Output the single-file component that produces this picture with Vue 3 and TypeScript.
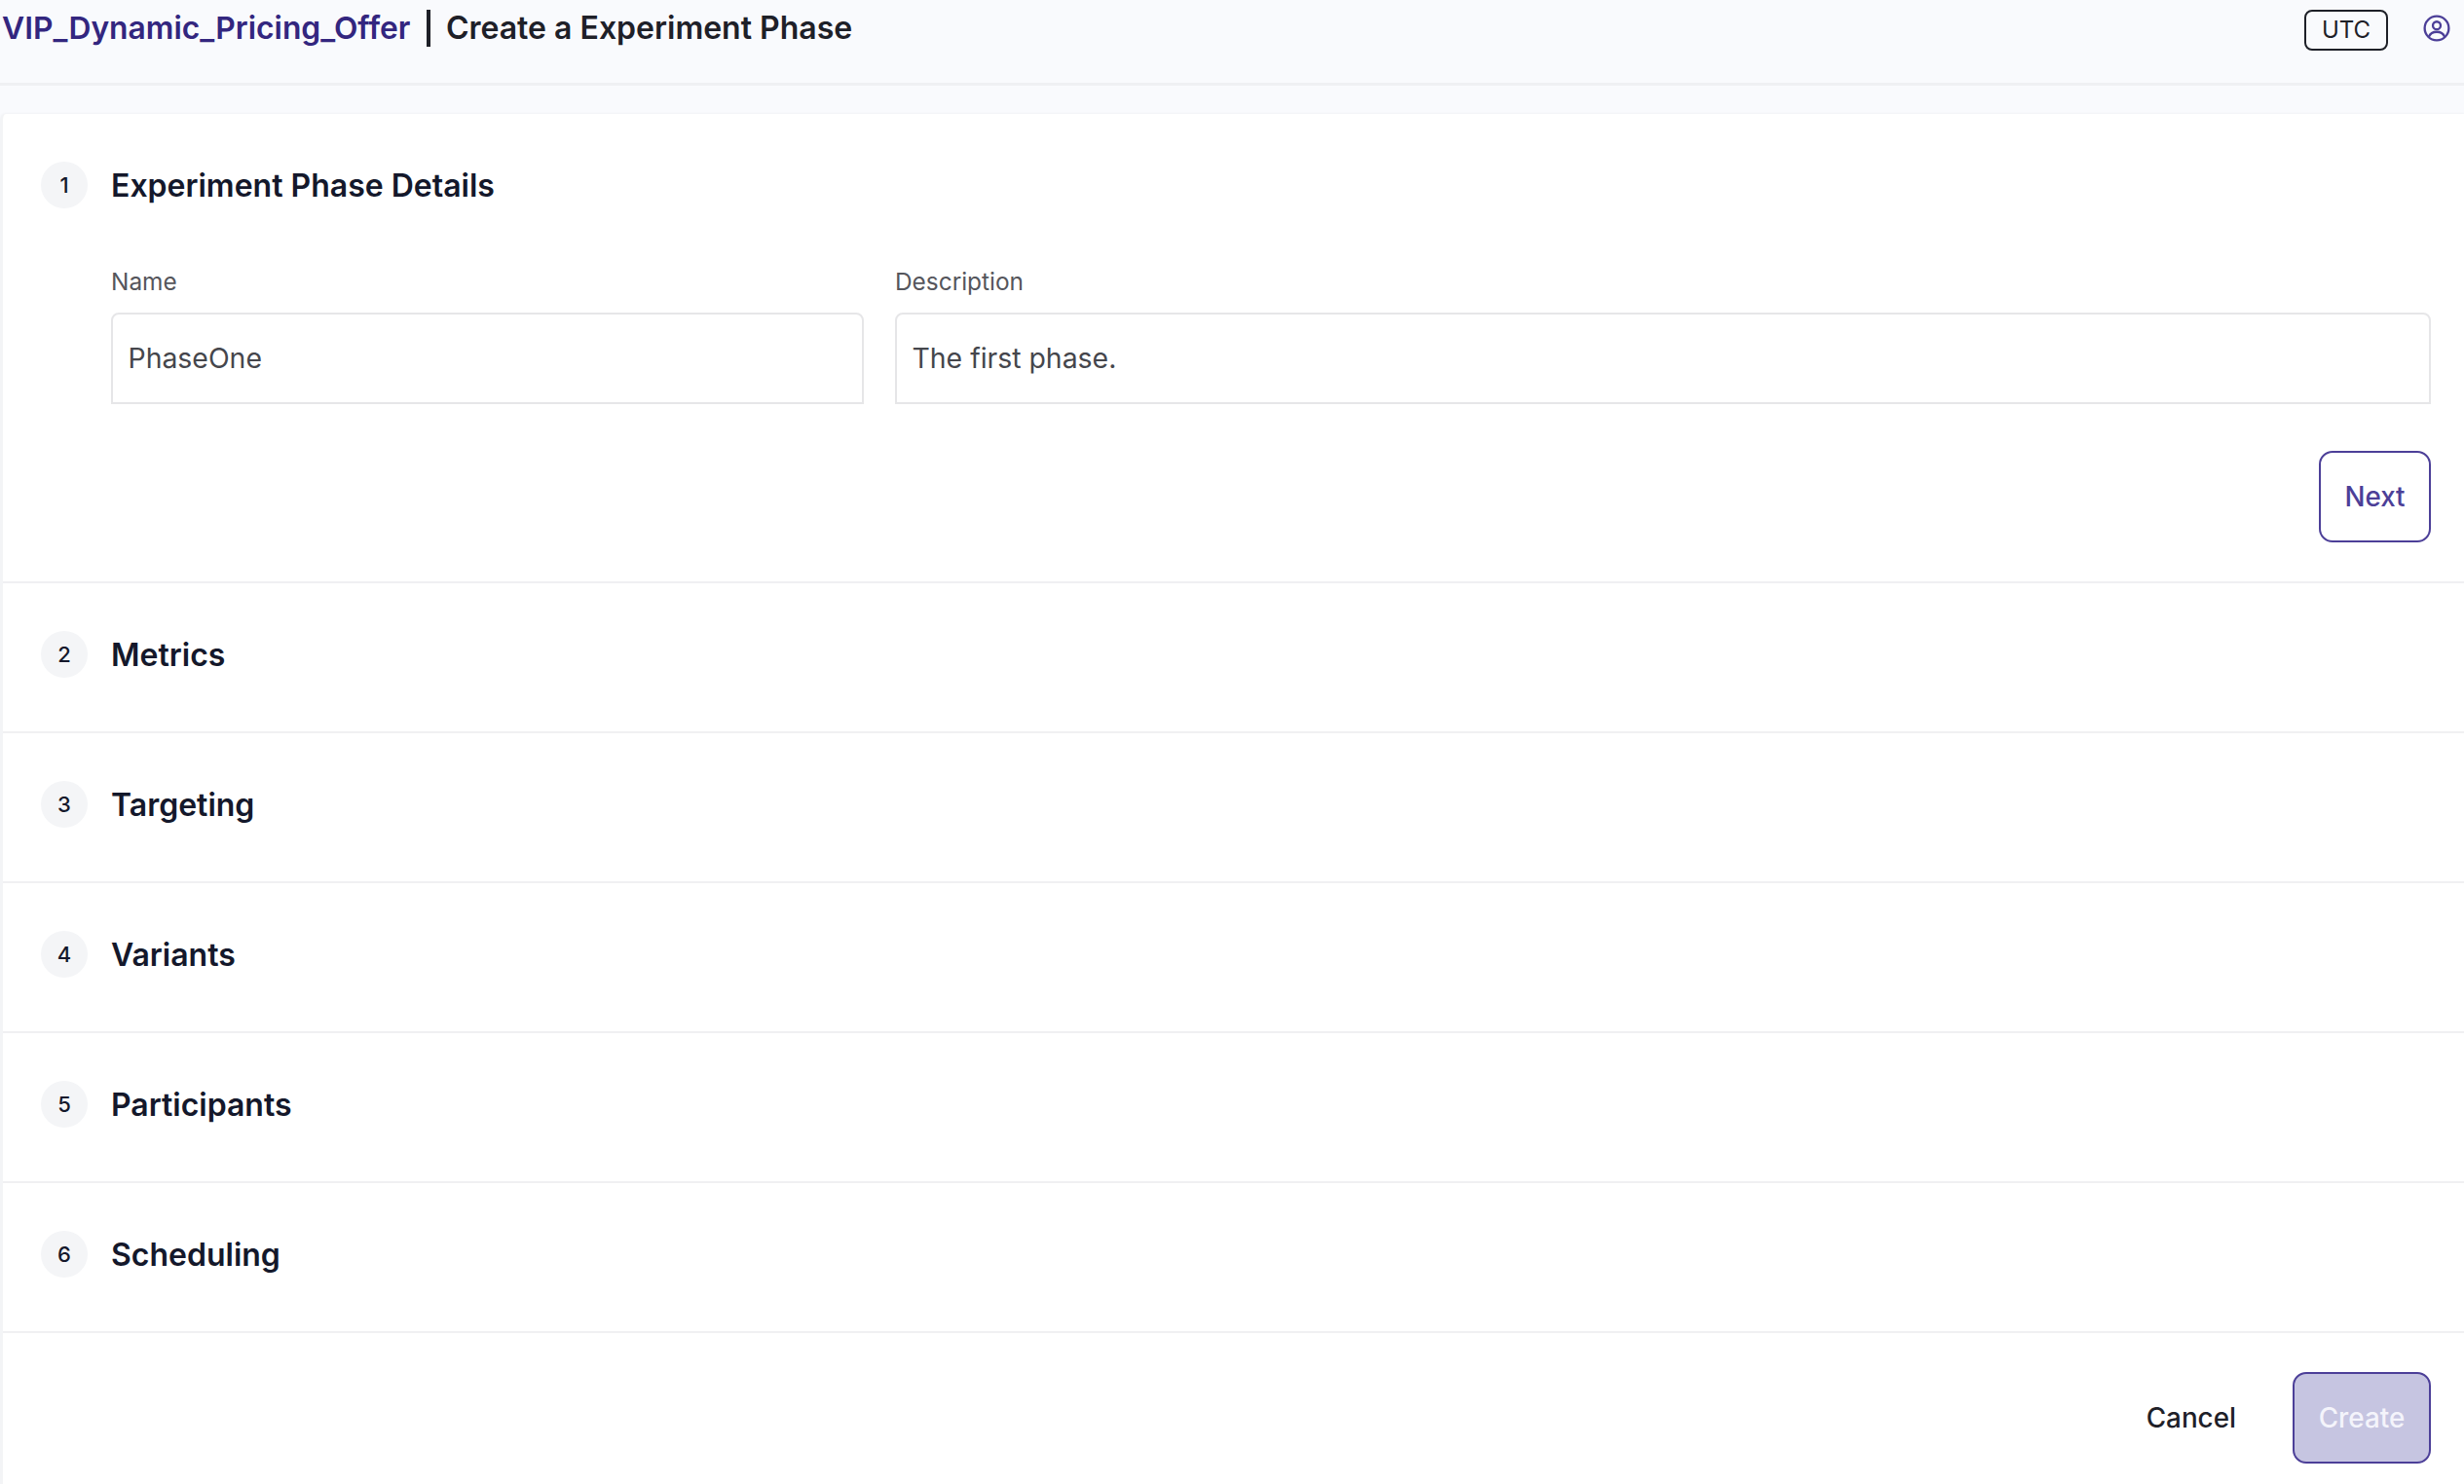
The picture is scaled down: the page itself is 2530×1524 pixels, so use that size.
<script setup lang="ts">
const sections: string[] = ['Metrics', 'Targeting', 'Variants', 'Participants', 'Scheduling']
</script>

<template>
  <div class="page">
    <header class="topbar">
      <div class="crumbs">
        <span class="exp">VIP_Dynamic_Pricing_Offer</span>
        <span class="sep"></span>
        <span class="title">Create a Experiment Phase</span>
      </div>
      <div class="tools">
        <span class="utc">UTC</span>
        <svg class="user" viewBox="0 0 24 24" fill="none" stroke="currentColor" stroke-width="2">
          <circle cx="12" cy="12" r="10.6" />
          <circle cx="12" cy="9.6" r="3.4" />
          <path d="M5 19.6c1.2-3 3.8-4.4 7-4.4s5.8 1.4 7 4.4" />
        </svg>
      </div>
    </header>
    <main class="card">
      <section class="step first">
        <div class="step-head">
          <span class="num">1</span>
          <h2>Experiment Phase Details</h2>
        </div>
        <div class="fields">
          <label class="field">
            <span class="lab">Name</span>
            <span class="input">PhaseOne</span>
          </label>
          <label class="field">
            <span class="lab">Description</span>
            <span class="input">The first phase.</span>
          </label>
        </div>
        <div class="next-row"><button class="btn next">Next</button></div>
      </section>
      <section v-for="(s, i) in sections" :key="s" class="step">
        <div class="step-head">
          <span class="num">{{ i + 2 }}</span>
          <h2>{{ s }}</h2>
        </div>
      </section>
      <footer class="foot">
        <button class="btn cancel">Cancel</button>
        <button class="btn create">Create</button>
      </footer>
    </main>
  </div>
</template>

<style>
html, body { margin: 0; background: #fff; }
</style>

<style scoped>
.page {
  width: 2530px;
  height: 1524px;
  overflow: hidden;
  background: #f9fafd;
  font-family: Inter, "Liberation Sans", sans-serif;
  color: #1e2028;
}
.topbar {
  height: 85px;
  border-bottom: 3px solid #eff0f3;
  box-sizing: content-box;
  display: flex;
  justify-content: space-between;
  align-items: flex-start;
  padding: 0 14px 0 2px;
}
.crumbs { display: flex; align-items: center; height: 57px; font-size: 31.8px; font-weight: 600; }
.exp { color: #33267f; }
.title { font-size: 32px; }
.sep { width: 4px; height: 38px; background: #1e2028; margin: 0 16px 0 16.5px; }
.tools { display: flex; align-items: center; height: 60px; gap: 36px; }
.utc {
  box-sizing: border-box;
  width: 86px;
  height: 42px;
  margin-top: 1px;
  border: 2.5px solid #1e2028;
  border-radius: 8px;
  display: flex;
  align-items: center;
  justify-content: center;
  font-size: 24px;
}
.user { width: 28px; height: 28px; color: #4c3f98; margin-top: -2px; }
.card {
  margin-top: 29px;
  background: #fff;
  border-left: 3px solid #f3f4f6;
  border-top-left-radius: 6px;
  box-shadow: 0 -1px 2px #f2f3f6;
  height: 1407px;
}
.step {
  height: 154px;
  border-bottom: 2.5px solid #f0f0f2;
  box-sizing: border-box;
  padding: 49px 34px 0 39px;
}
.step.first { height: 482px; }
.step-head { display: flex; align-items: center; height: 48px; }
.num {
  width: 48px;
  height: 48px;
  border-radius: 50%;
  background: #f4f5f7;
  display: flex;
  align-items: center;
  justify-content: center;
  font-size: 22px;
  font-weight: 500;
  color: #14182b;
  flex: none;
}
h2 {
  margin: 0 0 0 24px;
  font-size: 32px;
  font-weight: 600;
  color: #14182b;
}
.fields {
  display: grid;
  grid-template-columns: 773px 1fr;
  column-gap: 32px;
  margin: 54.5px 0 0 72px;
}
.field { display: flex; flex-direction: column; }
.lab { font-size: 24.4px; line-height: 40px; color: #55565c; }
.input {
  box-sizing: border-box;
  height: 94px;
  margin-top: 12px;
  border: 2.5px solid #e6e6e8;
  border-radius: 8px 8px 0 0;
  display: flex;
  align-items: center;
  padding: 0 15.5px;
  font-size: 28.4px;
  color: #45464c;
}
.next-row { display: flex; justify-content: flex-end; margin-top: 48px; }
.btn {
  box-sizing: border-box;
  height: 94px;
  border-radius: 14px;
  background: #fff;
  font-family: inherit;
  font-size: 27.8px;
  font-weight: 500;
  padding: 0;
}
.next { width: 115px; border: 2.5px solid #4c3f98; color: #4c3f98; font-weight: 450; }
.foot {
  display: flex;
  justify-content: flex-end;
  align-items: center;
  gap: 58px;
  padding: 40px 34px 0 0;
}
.cancel { border: 0; color: #1e2028; }
.create { width: 142px; border: 2.5px solid #4c3f98; background: #c6c5e1; color: #f4f4fb; }
</style>
